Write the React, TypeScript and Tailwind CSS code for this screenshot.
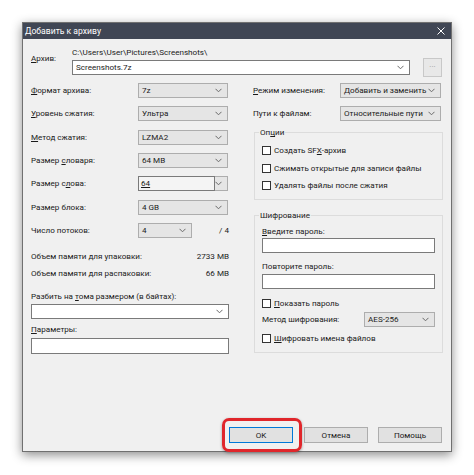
import React from "react";

const Chevron = () => (
  <svg width="7" height="5" viewBox="0 0 7 5" className="shrink-0">
    <polyline points="0.5,0.8 3.5,3.8 6.5,0.8" fill="none" stroke="#6a6a6a" strokeWidth="1" />
  </svg>
);

function Combo({ text, className, white }: { text?: React.ReactNode; className: string; white?: boolean }) {
  return (
    <div
      className={`flex h-[15px] items-center justify-between border pl-[3px] pr-[5px] ${
        white ? "border-[#7a7a7a] bg-white" : "border-[#adadad] bg-[#e5e5e5]"
      } ${className}`}
    >
      <span className="leading-[11px]">{text}</span>
      <Chevron />
    </div>
  );
}

function Check({ children }: { children: React.ReactNode }) {
  return (
    <div className="flex h-[17.5px] items-center">
      <span className="h-[9px] w-[9px] border border-[#333] bg-white" />
      <span className="ml-[3px] leading-[11px]">{children}</span>
    </div>
  );
}

function LeftRow({ label, children }: { label: React.ReactNode; children: React.ReactNode }) {
  return (
    <div className="flex h-[23.33px] items-center">
      <div className="w-[107px] leading-[11px]">{label}</div>
      {children}
    </div>
  );
}

export default function App() {
  return (
    <div className="h-[475px] w-[474px] whitespace-nowrap bg-white pl-[22px] pt-[22px] font-['Roboto',sans-serif] text-[8.1px] text-[#1a1a1a]">
      <div className="flex h-[430px] w-[430px] flex-col border border-[#707070] bg-[#f0f0f0] shadow-[0_3px_10px_rgba(0,0,0,0.45)]">
        {/* Title bar */}
        <div className="flex h-[16px] items-center justify-between bg-[#404654] pl-[2px] pr-[6px] text-[8.6px] text-white">
          <span className="leading-[12px]">Добавить к архиву</span>
          <svg width="8" height="8" viewBox="0 0 8 8">
            <path d="M0.5 0.5 L7.5 7.5 M7.5 0.5 L0.5 7.5" stroke="#ffffff" strokeWidth="1" />
          </svg>
        </div>

        {/* Body */}
        <div className="flex flex-1 flex-col pb-[8px] pl-[8px] pr-[8px]">
          {/* Archive */}
          <div className="mt-[8px] flex">
            <div className="w-[41px] pt-[6px] leading-[11px]">
              <u>А</u>рхив:
            </div>
            <div className="flex flex-col">
              <div className="h-[11px] leading-[11px]">C:\Users\User\Pictures\Screenshots\</div>
              <div className="flex items-center">
                <Combo white text="Screenshots.7z" className="w-[338px]" />
                <div className="ml-[13px] flex h-[19px] w-[19px] items-start justify-center border border-[#c8c8c8] bg-[#e8e8e8] text-[8px] leading-[12px] text-[#999]">
                  ...
                </div>
              </div>
            </div>
          </div>

          {/* Columns */}
          <div className="mt-[2px] flex">
            {/* Left column */}
            <div className="flex w-[198px] flex-col">
              <LeftRow label={<><u>Ф</u>ормат архива:</>}>
                <Combo text="7z" className="w-[90px]" />
              </LeftRow>
              <LeftRow label={<><u>У</u>ровень сжатия:</>}>
                <Combo text="Ультра" className="w-[90px]" />
              </LeftRow>
              <LeftRow label={<><u>М</u>етод сжатия:</>}>
                <Combo text="LZMA2" className="w-[90px]" />
              </LeftRow>
              <LeftRow label={<>Размер <u>с</u>ловаря:</>}>
                <Combo text="64 MB" className="w-[90px]" />
              </LeftRow>
              <LeftRow label={<>Размер с<u>л</u>ова:</>}>
                <div className="flex h-[15px] w-[90px] items-center justify-between border border-[#adadad] bg-[#e5e5e5] pr-[5px]">
                  <div className="-ml-px -mt-px flex h-[15px] w-[77px] items-center self-start border border-[#7a7a7a] bg-[#f4f4f4] pl-[2px] leading-[11px]">
                    <u>64</u>
                  </div>
                  <Chevron />
                </div>
              </LeftRow>
              <LeftRow label="Размер блока:">
                <Combo text="4 GB" className="w-[90px]" />
              </LeftRow>
              <LeftRow label="Число потоков:">
                <Combo text="4" className="w-[54px]" />
                <div className="flex-1 text-right leading-[11px]">/ 4</div>
              </LeftRow>

              <div className="mt-[5.5px] flex h-[17px] items-center justify-between">
                <span className="leading-[11px]">Объем памяти для упаковки:</span>
                <span className="leading-[11px]">2733 MB</span>
              </div>
              <div className="flex h-[17px] items-center justify-between">
                <span className="leading-[11px]">Объем памяти для распаковки:</span>
                <span className="leading-[11px]">66 MB</span>
              </div>

              <div className="mt-[8px] h-[13px] leading-[13px]">
                Разбить на <u>т</u>ома размером (в байтах):
              </div>
              <Combo white className="mt-[1px] w-[198px]" />
              <div className="mt-[4px] h-[13px] leading-[13px]">
                <u>П</u>араметры:
              </div>
              <div className="mt-[2.5px] h-[16px] w-[198px] border border-[#7a7a7a] bg-white" />
            </div>

            {/* Right column */}
            <div className="ml-[24px] flex w-[190px] flex-col">
              <div className="flex h-[23.33px] items-center">
                <div className="w-[87px] leading-[11px]">
                  <u>Р</u>ежим изменения:
                </div>
                <Combo text="Добавить и заменить" className="w-[101px]" />
              </div>
              <div className="flex h-[23.33px] items-center">
                <div className="w-[87px] leading-[11px]">Пути к файлам:</div>
                <Combo text="Относительные пути" className="w-[101px]" />
              </div>

              <fieldset className="ml-[1px] mt-[1.5px] w-[189px] border border-[#dcdcdc] px-[7px] pb-[4px]">
                <legend className="-ml-[3px] px-[1px] leading-[11px]">
                  Оп<u>ц</u>ии
                </legend>
                <div className="mt-[4px] flex flex-col">
                  <Check>
                    Создать SF<u>X</u>-архив
                  </Check>
                  <Check>Сжимать открытые для записи файлы</Check>
                  <Check>Удалять файлы после сжатия</Check>
                </div>
              </fieldset>

              <fieldset className="ml-[1px] mt-[10px] w-[189px] border border-[#dcdcdc] px-[7px] pb-[7px]">
                <legend className="-ml-[3px] px-[1px] leading-[11px]">Шифрование</legend>
                <div className="mt-[5px] h-[11px] leading-[11px]">
                  <u>В</u>ведите пароль:
                </div>
                <div className="mt-[1.5px] h-[15px] w-full border border-[#7a7a7a] bg-white" />
                <div className="mt-[7.5px] h-[11px] leading-[11px]">Повторите пароль:</div>
                <div className="mt-[2.5px] h-[15px] w-full border border-[#7a7a7a] bg-white" />
                <div className="mt-[7.5px] flex h-[13px] items-center">
                  <span className="h-[9px] w-[9px] border border-[#333] bg-white" />
                  <span className="ml-[3px] leading-[11px]">
                    <u>П</u>оказать пароль
                  </span>
                </div>
                <div className="mt-[2.5px] flex h-[15px] items-center justify-between">
                  <span className="leading-[11px]">Метод шифрования:</span>
                  <Combo text="AES-256" className="w-[71px]" />
                </div>
                <div className="mt-[4.5px] flex h-[13px] items-center">
                  <span className="h-[9px] w-[9px] border border-[#333] bg-white" />
                  <span className="ml-[3px] leading-[11px]">
                    <u>Ш</u>ифровать имена файлов
                  </span>
                </div>
              </fieldset>
            </div>
          </div>

          {/* Buttons */}
          <div className="mr-[1px] mt-auto flex justify-end">
            <div className="relative">
              <div className="flex h-[16px] w-[64px] items-center justify-center border border-[#0078d7] bg-[#e1e1e1] leading-[11px]">
                OK
              </div>
              <span className="absolute -bottom-[9px] -left-[7px] -right-[9px] -top-[9px] rounded-[7px] border-[3px] border-[#e0262b] shadow-[0_1px_3px_rgba(0,0,0,0.35)]" />
            </div>
            <div className="ml-[11px] flex h-[16px] w-[64px] items-center justify-center border border-[#adadad] bg-[#e1e1e1] leading-[11px]">
              Отмена
            </div>
            <div className="ml-[10px] flex h-[16px] w-[64px] items-center justify-center border border-[#adadad] bg-[#e1e1e1] leading-[11px]">
              Помощь
            </div>
          </div>
        </div>
      </div>
    </div>
  );
}
